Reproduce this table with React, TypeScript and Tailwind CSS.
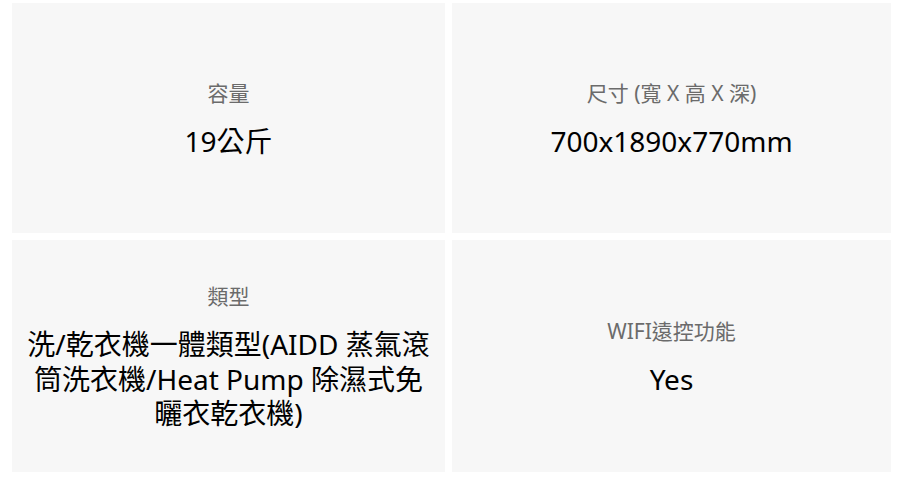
const specs = [
  { label: '容量', value: '19公斤' },
  { label: '尺寸 (寬 X 高 X 深)', value: '700x1890x770mm' },
  { label: '類型', value: '洗/乾衣機一體類型(AIDD 蒸氣滾筒洗衣機/Heat Pump 除濕式免曬衣乾衣機)' },
  { label: 'WIFI遠控功能', value: 'Yes' },
];

function SpecCard({ label, value }: { label: string; value: string }) {
  return (
    <div className="flex flex-col items-center justify-center bg-[#f7f7f7] px-3 text-center">
      <div className="text-[21px] leading-[30px] text-[#6b6b6b]">{label}</div>
      <div className="mt-[16px] text-[28px] leading-[34.5px] text-black">{value}</div>
    </div>
  );
}

export default function App() {
  return (
    <div
      className="h-[477px] w-[904px] bg-white pl-[12px] pt-[3px]"
      style={{ fontFamily: '"Noto Sans", "Noto Sans CJK TC", sans-serif' }}
    >
      <div className="grid grid-cols-[433px_439px] grid-rows-[230px_232px] gap-[7px]">
        {specs.map((s) => (
          <SpecCard key={s.label} label={s.label} value={s.value} />
        ))}
      </div>
    </div>
  );
}
